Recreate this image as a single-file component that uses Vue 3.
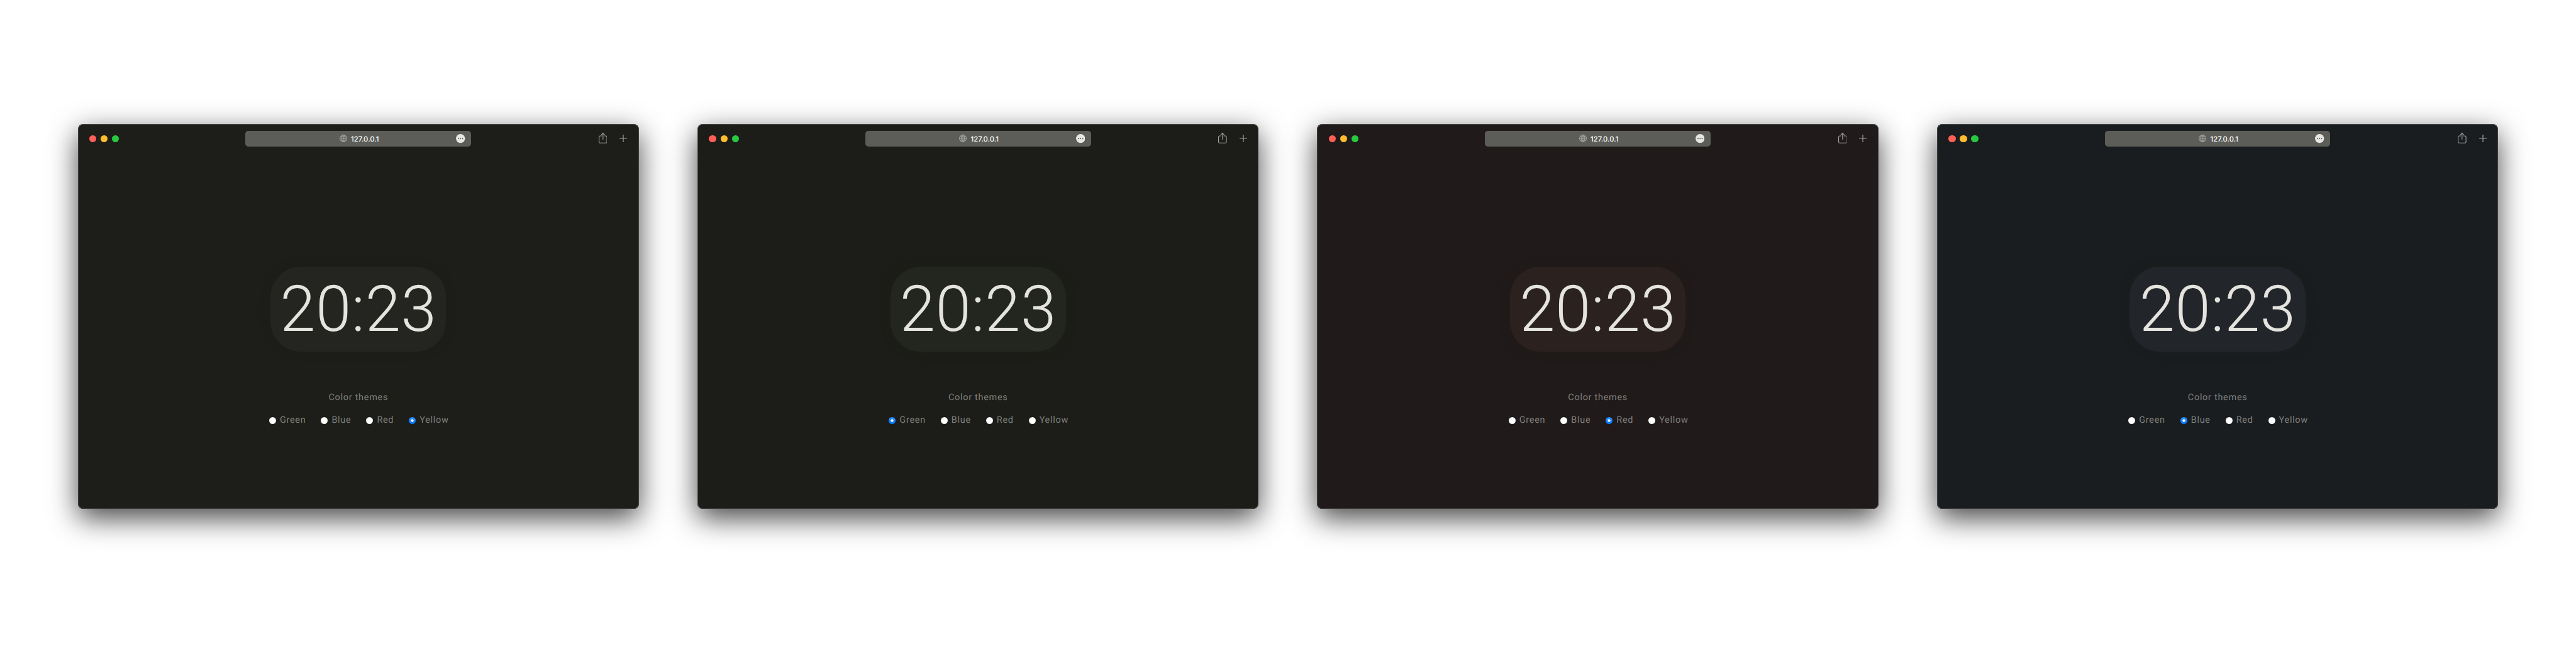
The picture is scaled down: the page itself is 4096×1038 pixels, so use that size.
<script setup>
const options = ['Green', 'Blue', 'Red', 'Yellow']
const windows = [
  { theme: 'yellow', selected: 'Yellow' },
  { theme: 'green', selected: 'Green' },
  { theme: 'red', selected: 'Red' },
  { theme: 'blue', selected: 'Blue' },
]
</script>

<template>
  <main class="stage">
    <section v-for="w in windows" :key="w.theme" class="window" :class="w.theme">
      <header class="toolbar">
        <div class="lights">
          <i class="light close"></i>
          <i class="light minimize"></i>
          <i class="light expand"></i>
        </div>
        <div class="address">
          <svg class="globe" viewBox="0 0 15 15" fill="none" stroke="currentColor" stroke-width="1">
            <circle cx="7.5" cy="7.5" r="6.9" />
            <ellipse cx="7.5" cy="7.5" rx="3.4" ry="6.9" />
            <path d="M7.5 .6v13.8M.6 7.5h13.8M1.8 3.8h11.4M1.8 11.2h11.4" />
          </svg>
          <span class="url">127.0.0.1</span>
          <svg class="more" viewBox="0 0 18 18">
            <circle cx="9" cy="9" r="8.9" fill="#e6e6e4" />
            <g fill="#5c5d58">
              <circle cx="4.9" cy="9" r="1.15" />
              <circle cx="9" cy="9" r="1.15" />
              <circle cx="13.1" cy="9" r="1.15" />
            </g>
          </svg>
        </div>
        <div class="actions">
          <svg class="share" viewBox="0 0 17 21" fill="none" stroke="currentColor" stroke-width="1.4" stroke-linecap="round" stroke-linejoin="round">
            <path d="M5.6 6.2H2.9Q.7 6.2 .7 8.4V18Q.7 20.2 2.9 20.2H14.1Q16.3 20.2 16.3 18V8.4Q16.3 6.2 14.1 6.2H11.4" />
            <path d="M8.5 13V1M5.3 3.9L8.5 .8L11.7 3.9" />
          </svg>
          <svg class="plus" viewBox="0 0 15 15" fill="none" stroke="currentColor" stroke-width="1.5" stroke-linecap="round">
            <path d="M7.5 .5v14M.5 7.5h14" />
          </svg>
        </div>
      </header>
      <div class="content">
        <div class="clock">20:23</div>
        <div class="title">Color themes</div>
        <div class="choices">
          <label v-for="o in options" :key="o" class="choice">
            <i class="radio" :class="{ checked: o === w.selected }"></i>
            <span>{{ o }}</span>
          </label>
        </div>
      </div>
    </section>
  </main>
</template>

<style>
/* 1rem is ten units of the 5104-unit wide artboard */
html {
  font-size: calc(100vw / 510.4);
  background: #fff;
}
body {
  margin: 0;
  overflow: hidden;
}
</style>

<style scoped>
.stage {
  display: flex;
  gap: 11.6rem;
  box-sizing: border-box;
  height: 100vh;
  padding: 24.5rem 0 0 15.4rem;
  overflow: hidden;
  background: #fff;
  text-rendering: geometricPrecision;
}
.window {
  flex: none;
  width: 111.2rem;
  height: 76.3rem;
  border-radius: 1.1rem;
  background: var(--bg);
  box-shadow:
    inset 0 1px 0 #4f504d,
    inset 0 0 0 1px #40403e,
    0 1.8rem 5.6rem rgba(0, 0, 0, 0.72);
}
.yellow { --bg: #1d1e19; --card: #242520; --glow: #1c1d19; }
.green { --bg: #1c1d18; --card: #23261e; --glow: #1d1e19; }
.red { --bg: #201a1a; --card: #2b2220; --glow: #1f1c16; }
.blue { --bg: #191d1f; --card: #22252a; --glow: #1e1e1e; }

.toolbar {
  display: grid;
  grid-template-columns: 1fr 44.7rem 1fr;
  align-items: center;
  height: 5.9rem;
  padding: 0 2.3rem;
}
.lights {
  display: flex;
  gap: 0.85rem;
}
.light {
  width: 1.4rem;
  height: 1.4rem;
  border-radius: 50%;
}
.close { background: #ff5f57; }
.minimize { background: #febc2e; }
.expand { background: #28c840; }

.address {
  display: flex;
  align-items: center;
  box-sizing: border-box;
  height: 3.1rem;
  padding: 0 1.2rem 0 18.6rem;
  border-radius: 0.6rem;
  background: #5c5d58;
}
.globe {
  width: 1.5rem;
  height: 1.5rem;
  margin: 0 0.8rem 0.1rem 0;
  color: #b2b3b0;
}
.url {
  margin-top: 0.2rem;
  font: 500 1.4rem/3rem Inter, sans-serif;
  color: #fff;
  letter-spacing: 0.01rem;
}
.more {
  width: 1.8rem;
  height: 1.8rem;
  margin-left: auto;
}
.actions {
  display: flex;
  align-items: center;
  justify-content: flex-end;
  gap: 2.5rem;
  color: #a3a4a0;
}
.share {
  width: 1.7rem;
  height: 2.1rem;
  margin-bottom: 0.1rem;
}
.plus {
  width: 1.5rem;
  height: 1.5rem;
  margin-bottom: 0.1rem;
}

.content {
  display: flex;
  flex-direction: column;
  align-items: center;
  padding-top: 22.4rem;
  font-family: Roboto, sans-serif;
}
.clock {
  width: 34.8rem;
  height: 16.9rem;
  border-radius: 6rem;
  background: var(--card);
  box-shadow: 0 0 1.6rem var(--glow);
  color: #e4e3de;
  font-size: 12.65rem;
  font-weight: 300;
  line-height: 17.05rem;
  letter-spacing: 0.06rem;
  text-align: center;
}
.title {
  margin-top: 7.75rem;
  color: #80807e;
  font-size: 1.8rem;
  line-height: 2.4rem;
  letter-spacing: 0.09rem;
}
.choices {
  display: flex;
  gap: 3rem;
  margin: 2.1rem 0 0 0.25rem;
  color: #80807e;
  font-size: 1.8rem;
  line-height: 2.4rem;
  letter-spacing: 0.09rem;
}
.choice {
  display: flex;
  align-items: center;
  gap: 0.75rem;
}
.radio {
  width: 1.36rem;
  height: 1.36rem;
  margin-top: 0.3rem;
  border-radius: 50%;
  background: #fff;
  box-shadow: inset 0 0 0.15rem rgba(0, 0, 0, 0.3);
}
.radio.checked {
  background:
    radial-gradient(circle, #fff 0.22rem, rgba(255, 255, 255, 0) 0.31rem),
    linear-gradient(#2f8fff, #0074ff);
  box-shadow: none;
}
</style>
